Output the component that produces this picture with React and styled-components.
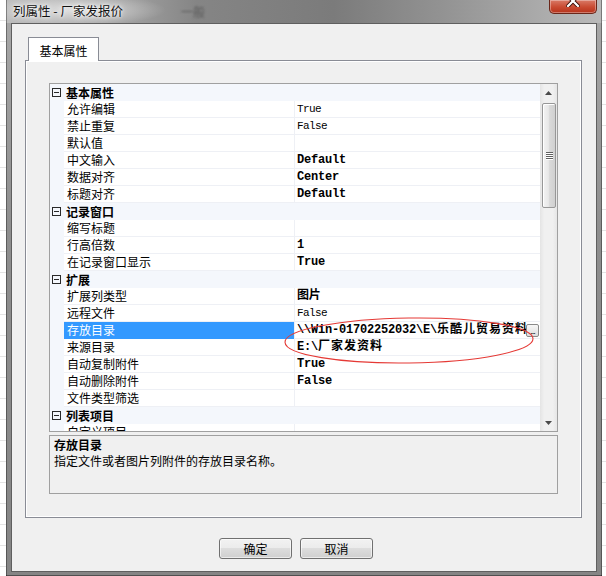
import React from 'react';
import styled, { createGlobalStyle } from 'styled-components';

const GlobalStyle = createGlobalStyle`
  html, body { margin: 0; padding: 0; }
  body {
    width: 606px;
    height: 576px;
    overflow: hidden;
    background: repeating-linear-gradient(to bottom, #ffffff 0 20px, #e4e4e4 20px 21px);
    font-family: "Noto Sans CJK SC", "Noto Sans", sans-serif;
    font-size: 12px;
    color: #000;
  }
  * { box-sizing: border-box; }
`;

const Page = styled.div`
  display: flex;
  height: 576px;
  padding-left: 6px;
`;

const Window = styled.div`
  width: 596px;
  height: 576px;
  display: flex;
  flex-direction: column;
  padding: 0 5px 4px 5px;
  background:
    radial-gradient(ellipse 90px 16px at 70px 10px, rgba(255,255,255,0.6), rgba(255,255,255,0) 100%),
    linear-gradient(to right, #bdbdbd 0%, #a6a6a6 18%, #858585 32%, #7b7b7b 55%, #959595 75%, #bababa 100%) top / 100% 23px no-repeat,
    linear-gradient(to bottom, #a9a9a9, #8e8e8e 40%, #858585);
  box-shadow: inset 1px 0 0 rgba(0,0,0,0.35), inset -1px 0 0 rgba(0,0,0,0.35), inset 0 -1px 0 rgba(0,0,0,0.4);
`;

const TitleBar = styled.div`
  height: 23px;
  display: flex;
  align-items: flex-start;
  flex: none;
`;

const Title = styled.span`
  margin-top: 3px;
  padding-left: 2px;
  line-height: 16px;
  font-size: 12.5px;
  color: #111;
  white-space: nowrap;
  text-shadow: 0 0 6px #fff, 0 0 3px #fff;
`;

const GhostText = styled.span`
  margin-left: 58px;
  margin-top: 5px;
  line-height: 14px;
  font-size: 12px;
  color: #5a5a5a;
  filter: blur(1px);
`;

const CloseButton = styled.div`
  margin-left: auto;
  width: 48px;
  height: 14px;
  display: flex;
  justify-content: center;
  align-items: flex-start;
  overflow: hidden;
  border: 1px solid #6a2619;
  border-top: none;
  border-radius: 0 0 5px 5px;
  background: linear-gradient(to bottom, #d97a67, #c94a31 55%, #b5331c);
  box-shadow: inset 0 0 0 1px rgba(255,255,255,0.35);
`;

const Client = styled.div`
  flex: 1;
  display: flex;
  flex-direction: column;
  border: 1px solid #5f5f5f;
  background: #f0f0f0;
  padding: 13px 14px 12px 13px;
`;

const TabStrip = styled.div`
  display: flex;
  padding-left: 3px;
  height: 24px;
  margin-bottom: -1px;
  position: relative;
  z-index: 1;
`;

const Tab = styled.div`
  width: 71px;
  height: 24px;
  border: 1px solid #898c95;
  border-bottom: none;
  background: #ffffff;
  display: flex;
  align-items: center;
  justify-content: center;
  font-size: 12px;
  padding-top: 1px;
`;

const TabPanel = styled.div`
  height: 458px;
  border: 1px solid #898c95;
  background: #f0f0f0;
  box-shadow: inset 1px 1px 0 #ffffff, inset -1px -1px 0 #ffffff;
  padding: 22px 23px 23px 23px;
  display: flex;
  flex-direction: column;
  gap: 3px;
`;

const Grid = styled.div`
  height: 349px;
  border: 1px solid #a0a0a0;
  background: #ffffff;
  display: flex;
  overflow: hidden;
`;

const RowsArea = styled.div`
  flex: 1;
  position: relative;
  overflow: hidden;
  display: flex;
  flex-direction: column;
`;

const CatRow = styled.div`
  height: 17px;
  flex: none;
  display: flex;
  align-items: center;
  background: #f4f7fc;
`;

const Toggle = styled.span`
  width: 9px;
  height: 9px;
  margin-left: 2px;
  border: 1px solid #2a2a2a;
  position: relative;
  flex: none;
  &::after {
    content: '';
    position: absolute;
    left: 1px;
    right: 1px;
    top: 3px;
    height: 1px;
    background: #2a2a2a;
  }
`;

const CatLabel = styled.span`
  margin-left: 5px;
  font-weight: 700;
  line-height: 16px;
`;

const PropRow = styled.div`
  height: 17px;
  flex: none;
  display: grid;
  grid-template-columns: 14px 230px 1fr;
`;

const Gutter = styled.div`
  background: #f4f7fc;
`;

const NameCell = styled.div`
  padding-left: 3px;
  line-height: 16px;
  white-space: nowrap;
  overflow: hidden;
  background: ${p => (p.$selected ? '#3399ff' : '#ffffff')};
  color: ${p => (p.$selected ? '#ffffff' : '#000000')};
  border-bottom: 1px solid ${p => (p.$selected ? '#3399ff' : '#eef0f5')};
`;

const ValueCell = styled.div`
  display: flex;
  align-items: center;
  min-width: 0;
  padding-left: 2px;
  border-left: 1px solid #eef0f5;
  border-bottom: 1px solid #eef0f5;
`;

const ValueText = styled.span`
  flex: 1;
  min-width: 0;
  overflow: hidden;
  white-space: nowrap;
  line-height: 16px;
  font-family: "Liberation Mono", "Noto Sans CJK SC", monospace;
  font-size: ${p => (p.$bold ? '12px' : '11px')};
  font-weight: ${p => (p.$bold ? 700 : 400)};
  letter-spacing: ${p => (p.$bold ? '-0.2px' : '-0.6px')};
`;

const WideText = styled.span`
  letter-spacing: 1px;
`;

const EllipsisButton = styled.span`
  flex: none;
  width: 13px;
  height: 13px;
  margin-right: 1px;
  border: 1px solid #8a8a8a;
  border-radius: 2px;
  background: linear-gradient(to bottom, #f7f7f7, #dedede);
  font-family: "Liberation Sans", sans-serif;
  font-size: 9px;
  line-height: 13px;
  text-align: center;
  letter-spacing: -1px;
`;

const Annotation = styled.svg`
  position: absolute;
  left: 234px;
  top: 232px;
  overflow: visible;
  pointer-events: none;
`;

const ScrollBar = styled.div`
  width: 17px;
  flex: none;
  display: flex;
  flex-direction: column;
  background: linear-gradient(to right, #e4e4e4, #f0f0f0 25%, #f0f0f0 75%, #e6e6e6);
`;

const ArrowBox = styled.div`
  height: 17px;
  flex: none;
  display: flex;
  align-items: center;
  justify-content: center;
`;

const Thumb = styled.div`
  height: 105px;
  margin: 2px 1px 0 2px;
  border: 1px solid #979797;
  border-radius: 2px;
  background: linear-gradient(to right, #f3f3f3, #e8e8e8 45%, #d9d9d9 55%, #d0d0d0);
  box-shadow: inset 1px 1px 0 #ffffff;
  display: flex;
  flex-direction: column;
  align-items: center;
  justify-content: center;
  gap: 1px;
`;

const GripLine = styled.span`
  width: 7px;
  height: 1px;
  background: #606060;
  box-shadow: 0 1px 0 #ffffff;
`;

const Track = styled.div`
  flex: 1;
`;

const DescBox = styled.div`
  height: 59px;
  border: 1px solid #a0a0a0;
  background: #f0f0f0;
  padding: 1px 4px;
  line-height: 16px;
`;

const DescTitle = styled.div`
  font-weight: 700;
`;

const ButtonRow = styled.div`
  display: flex;
  gap: 8px;
  margin-top: 20px;
  padding-left: 194px;
`;

const DialogButton = styled.button`
  width: 73px;
  height: 21px;
  padding: 0;
  border: 1px solid #707070;
  border-radius: 3px;
  background: linear-gradient(to bottom, #f2f2f2 0%, #ebebeb 49%, #dddddd 50%, #cfcfcf 100%);
  box-shadow: inset 0 0 0 1px rgba(255,255,255,0.6);
  font-family: "Noto Sans CJK SC", sans-serif;
  font-size: 12px;
  color: #000;
  line-height: 19px;
`;

const rows = [
  { cat: '基本属性' },
  { name: '允许编辑', value: 'True' },
  { name: '禁止重复', value: 'False' },
  { name: '默认值', value: '' },
  { name: '中文输入', value: 'Default', bold: true },
  { name: '数据对齐', value: 'Center', bold: true },
  { name: '标题对齐', value: 'Default', bold: true },
  { cat: '记录窗口' },
  { name: '缩写标题', value: '' },
  { name: '行高倍数', value: '1', bold: true },
  { name: '在记录窗口显示', value: 'True', bold: true },
  { cat: '扩展' },
  { name: '扩展列类型', value: '图片', bold: true },
  { name: '远程文件', value: 'False' },
  { name: '存放目录', value: '\\\\Win-01702252032\\E\\', wide: '乐酷儿贸易资料', bold: true, selected: true, button: true },
  { name: '来源目录', value: 'E:\\', wide: '厂家发资料', bold: true },
  { name: '自动复制附件', value: 'True', bold: true },
  { name: '自动删除附件', value: 'False', bold: true },
  { name: '文件类型筛选', value: '' },
  { cat: '列表项目' },
  { name: '自定义项目', value: '' },
];

export default function App() {
  return (
    <>
      <GlobalStyle />
      <Page>
        <Window>
          <TitleBar>
            <Title>列属性 - 厂家发报价</Title>
            <GhostText>一般</GhostText>
            <CloseButton>
              <svg width="14" height="12" viewBox="0 0 14 12" style={{ marginTop: -5 }}>
                <path d="M2 1 L12 11 M12 1 L2 11" stroke="#3a0d05" strokeWidth="4" strokeLinecap="square" />
                <path d="M2 1 L12 11 M12 1 L2 11" stroke="#ffffff" strokeWidth="2.2" strokeLinecap="square" />
              </svg>
            </CloseButton>
          </TitleBar>
          <Client>
            <TabStrip>
              <Tab>基本属性</Tab>
            </TabStrip>
            <TabPanel>
              <Grid>
                <RowsArea>
                  {rows.map((r, i) =>
                    r.cat ? (
                      <CatRow key={i}>
                        <Toggle />
                        <CatLabel>{r.cat}</CatLabel>
                      </CatRow>
                    ) : (
                      <PropRow key={i}>
                        <Gutter />
                        <NameCell $selected={r.selected}>{r.name}</NameCell>
                        <ValueCell>
                          <ValueText $bold={r.bold}>
                            {r.value}
                            {r.wide && <WideText>{r.wide}</WideText>}
                          </ValueText>
                          {r.button && <EllipsisButton>...</EllipsisButton>}
                        </ValueCell>
                      </PropRow>
                    )
                  )}
                  <Annotation width="250" height="50" viewBox="0 0 250 50">
                    <ellipse cx="125" cy="24.5" rx="124" ry="22.5" fill="none" stroke="#e53935" strokeWidth="1.1" transform="rotate(-0.8 125 24.5)" />
                  </Annotation>
                </RowsArea>
                <ScrollBar>
                  <ArrowBox>
                    <svg width="7" height="4" viewBox="0 0 7 4"><path d="M0 4 L3.5 0 L7 4 Z" fill="#4a4a4a" /></svg>
                  </ArrowBox>
                  <Thumb>
                    <GripLine />
                    <GripLine />
                    <GripLine />
                    <GripLine />
                  </Thumb>
                  <Track />
                  <ArrowBox>
                    <svg width="7" height="4" viewBox="0 0 7 4"><path d="M0 0 L7 0 L3.5 4 Z" fill="#4a4a4a" /></svg>
                  </ArrowBox>
                </ScrollBar>
              </Grid>
              <DescBox>
                <DescTitle>存放目录</DescTitle>
                <div>指定文件或者图片列附件的存放目录名称。</div>
              </DescBox>
            </TabPanel>
            <ButtonRow>
              <DialogButton>确定</DialogButton>
              <DialogButton>取消</DialogButton>
            </ButtonRow>
          </Client>
        </Window>
      </Page>
    </>
  );
}
